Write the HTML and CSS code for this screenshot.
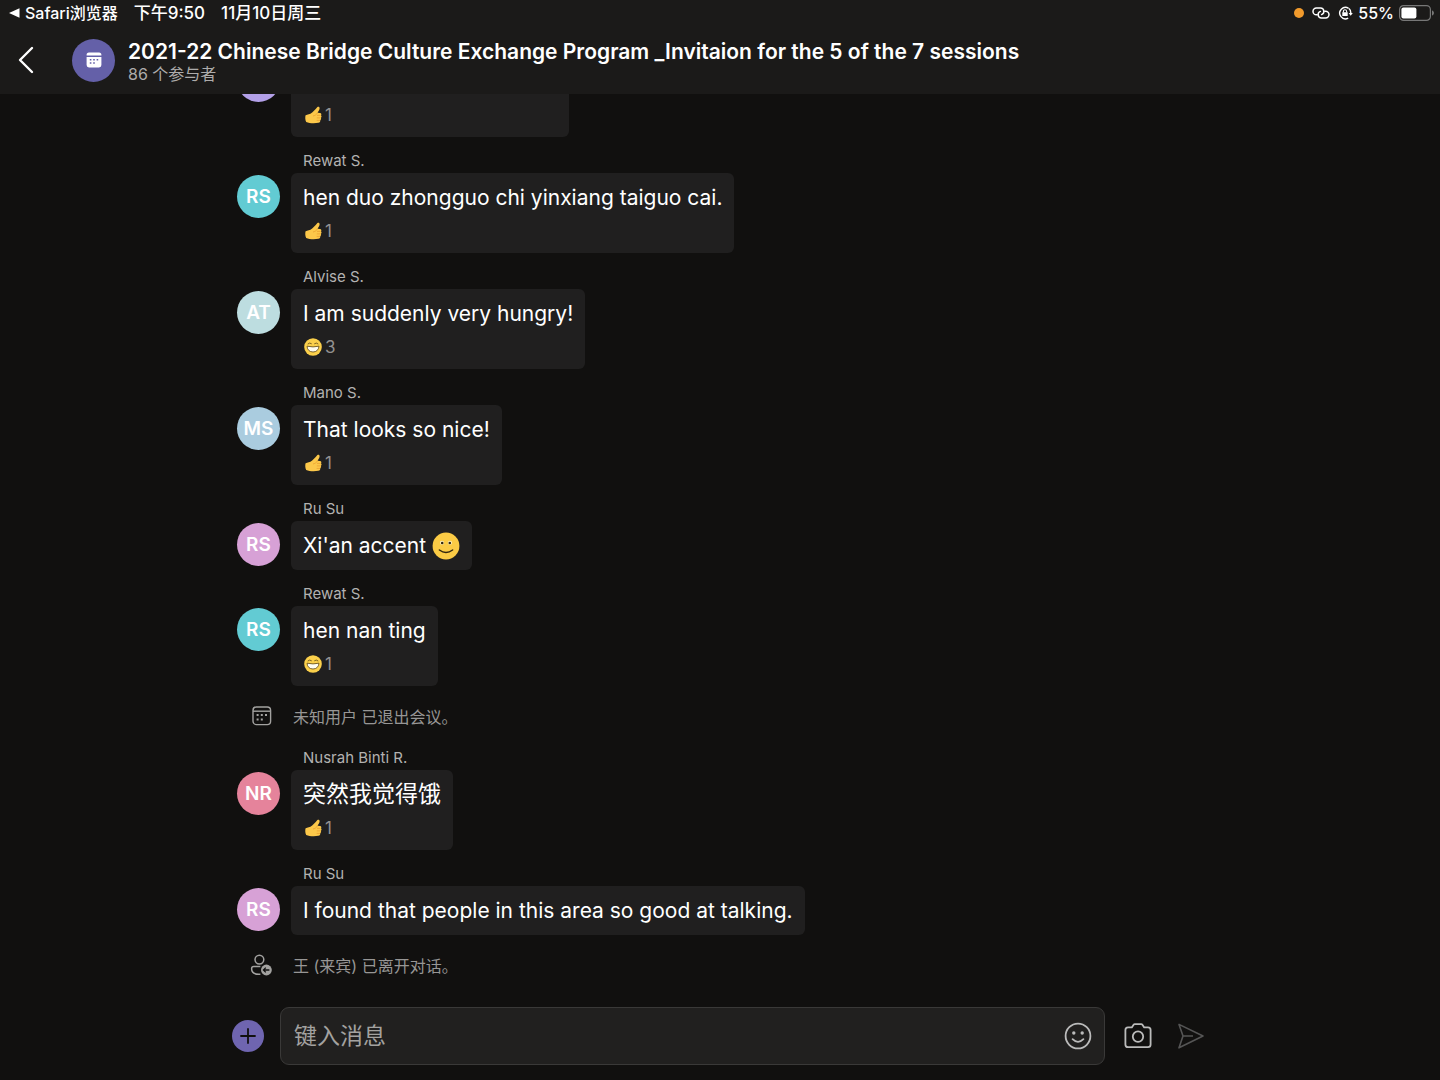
FILE: index.html
```html
<!DOCTYPE html>
<html lang="zh-CN">

<head>
  <meta charset="UTF-8">
  <meta name="viewport" content="width=device-width, initial-scale=1.0">
  <title>Meeting chat</title>
  <link rel="stylesheet" href="styles.css">
</head>

<body>

  <!-- shared icons -->
  <svg class="sprite" aria-hidden="true">
    <symbol id="thumb" viewBox="0 0 18 18">
      <path fill="#fcc84a" d="M1.6 9.2C3 8.6 4.8 8.4 6.4 7.8C8.8 6.2 11.2 3.6 13.4 1C14.4.2 15.8.8 15.6 2.4C15.4 4 14.2 5.4 13.6 6.8L16 6.9C17.4 7 17.8 8.4 17 9.2C17.8 10 17.7 11.2 16.9 11.8C17.4 12.6 17 13.7 16.3 14.2C16.5 15.4 15.8 16.5 14.4 16.8C10.4 17.6 5.2 17.3 2.2 16C1.2 14.4 1 11 1.6 9.2Z"/>
      <path fill="none" stroke="#e89b2c" stroke-width=".7" d="M13 9.4H16.6M12.8 11.9H16.6M12.6 14.4H16M9 10C10.8 9.6 12.6 8.6 13.6 6.8"/>
    </symbol>
    <symbol id="laugh" viewBox="0 0 18 18">
      <circle cx="9" cy="9" r="8.8" fill="#fbd04b"/>
      <path fill="none" stroke="#5b4514" stroke-width=".8" stroke-linecap="round" d="M4 5.8Q5.6 4.2 7.4 5.6M10.6 5.6Q12.4 4.2 14 5.8"/>
      <path fill="#fffdf0" stroke="#5b4514" stroke-width=".8" stroke-linejoin="round" d="M3 8.2Q9 9.6 15 8.2Q14.4 13.8 9 14Q3.6 13.8 3 8.2Z"/>
    </symbol>
  </svg>

  <header class="top-bar">
    <div class="status-bar">
      <div class="status-left">
        <svg width="11" height="10" viewBox="0 0 11 10"><path fill="#fff" d="M10.5.2V9.8L0 5Z"/></svg>
        <span>Safari浏览器</span>
        <span class="status-time">下午9:50</span>
        <span class="status-time">11月10日周三</span>
      </div>
      <div class="status-right">
        <span class="mic-dot"></span>
        <svg width="18" height="12" viewBox="0 0 18 12" fill="none" stroke="#fff" stroke-width="1.5" stroke-linecap="round">
          <path d="M5.2 7.8H4.4A3.4 3.4 0 0 1 4.4 1H8.6A3.4 3.4 0 0 1 9.6 7.6"/>
          <path d="M12.8 4.2H13.6A3.4 3.4 0 0 1 13.6 11H9.4A3.4 3.4 0 0 1 8.4 4.4"/>
        </svg>
        <svg width="15" height="14" viewBox="0 0 15 14" fill="none" stroke="#fff" stroke-width="1.4">
          <path d="M10.6 2.3A5.7 5.7 0 1 0 10.2 12.1M11 2.6A5.7 5.7 0 0 1 12.7 7.4"/>
          <path fill="#fff" stroke="none" d="M10.6 7H14.8L12.7 9.8ZM4.3 6.3H9.7V10H4.3Z"/>
          <path stroke-width="1.1" d="M5.4 6.5V5.3A1.6 1.6 0 0 1 8.6 5.3V6.5"/>
        </svg>
        <span class="battery-text">55%</span>
        <svg width="35" height="16" viewBox="0 0 35 16">
          <rect x=".6" y=".6" width="30.8" height="14.8" rx="4" fill="none" stroke="#777" stroke-width="1.2"/>
          <rect x="2.4" y="2.4" width="15" height="11.2" rx="2" fill="#fff"/>
          <path fill="#777" d="M33 5.2Q35 6.4 35 8T33 10.8Z"/>
        </svg>
      </div>
    </div>
    <div class="chat-header">
      <button class="back-button" type="button" aria-label="返回">
        <svg width="16" height="28" viewBox="0 0 16 28" fill="none" stroke="#fff" stroke-width="2.4" stroke-linecap="round" stroke-linejoin="round"><path d="M14 2L2 14L14 26"/></svg>
      </button>
      <div class="avatar meeting-avatar">
        <svg width="16" height="16" viewBox="0 0 16 16">
          <path fill="#fff" d="M3 .5H13A2.4 2.4 0 0 1 15.4 3V3.6H.6V3A2.4 2.4 0 0 1 3 .5ZM.6 5H15.4V13A2.4 2.4 0 0 1 13 15.4H3A2.4 2.4 0 0 1 .6 13Z"/>
          <path fill="#6460a8" d="M3.8 7H5.4V8.6H3.8ZM7.2 7H8.8V8.6H7.2ZM10.6 7H12.2V8.6H10.6ZM3.8 10.2H5.4V11.8H3.8ZM7.2 10.2H8.8V11.8H7.2Z"/>
        </svg>
      </div>
      <div class="chat-title">
        <h1>2021-22 Chinese Bridge Culture Exchange Program _Invitaion for the 5 of the 7 sessions</h1>
        <p>86 个参与者</p>
      </div>
    </div>
  </header>

  <!-- column-reverse keeps the list scrolled to the newest message -->
  <main class="chat">
    <ul class="messages">
      <li class="message">
        <div class="avatar violet"></div>
        <div class="message-body">
          <div class="bubble bubble-media">
            <div class="reaction"><svg width="18" height="18"><use href="#thumb"/></svg>1</div>
          </div>
        </div>
      </li>
      <li class="message">
        <div class="avatar teal">RS</div>
        <div class="message-body">
          <div class="sender">Rewat S.</div>
          <div class="bubble">
            <p>hen duo zhongguo chi yinxiang taiguo cai.</p>
            <div class="reaction"><svg width="18" height="18"><use href="#thumb"/></svg>1</div>
          </div>
        </div>
      </li>
      <li class="message">
        <div class="avatar mint">AT</div>
        <div class="message-body">
          <div class="sender">Alvise S.</div>
          <div class="bubble">
            <p>I am suddenly very hungry!</p>
            <div class="reaction"><svg width="18" height="18"><use href="#laugh"/></svg>3</div>
          </div>
        </div>
      </li>
      <li class="message">
        <div class="avatar blue">MS</div>
        <div class="message-body">
          <div class="sender">Mano S.</div>
          <div class="bubble">
            <p>That looks so nice!</p>
            <div class="reaction"><svg width="18" height="18"><use href="#thumb"/></svg>1</div>
          </div>
        </div>
      </li>
      <li class="message">
        <div class="avatar pink">RS</div>
        <div class="message-body">
          <div class="sender">Ru Su</div>
          <div class="bubble">
            <p>Xi'an accent
              <svg width="28" height="28" viewBox="0 0 28 28">
                <circle cx="14" cy="14" r="13.4" fill="#fbcb45"/>
                <circle cx="10" cy="10.8" r="2" fill="#fff3c4"/>
                <circle cx="18" cy="10.8" r="2" fill="#fff3c4"/>
                <circle cx="10.2" cy="11" r="1.3" fill="#33270f"/>
                <circle cx="17.8" cy="11" r="1.3" fill="#33270f"/>
                <path fill="none" stroke="#33270f" stroke-width="1.5" stroke-linecap="round" d="M7.4 18Q14 22.8 20.6 18"/>
              </svg>
            </p>
          </div>
        </div>
      </li>
      <li class="message">
        <div class="avatar teal">RS</div>
        <div class="message-body">
          <div class="sender">Rewat S.</div>
          <div class="bubble">
            <p>hen nan ting</p>
            <div class="reaction"><svg width="18" height="18"><use href="#laugh"/></svg>1</div>
          </div>
        </div>
      </li>
      <li class="system">
        <svg width="22" height="22" viewBox="0 0 22 22" fill="none" stroke="#a3a2a0" stroke-width="1.4">
          <rect x="3" y="2" width="17.6" height="17.6" rx="3.4"/>
          <path d="M3 6.2H20.6"/>
          <path fill="#a3a2a0" stroke="none" d="M6.6 9H8.6V11H6.6ZM10.8 9H12.8V11H10.8ZM15 9H17V11H15ZM6.6 13.4H8.6V15.4H6.6ZM10.8 13.4H12.8V15.4H10.8Z"/>
        </svg>
        <span>未知用户 已退出会议。</span>
      </li>
      <li class="message">
        <div class="avatar rose">NR</div>
        <div class="message-body">
          <div class="sender">Nusrah Binti R.</div>
          <div class="bubble">
            <p class="chinese">突然我觉得饿</p>
            <div class="reaction"><svg width="18" height="18"><use href="#thumb"/></svg>1</div>
          </div>
        </div>
      </li>
      <li class="message">
        <div class="avatar pink">RS</div>
        <div class="message-body">
          <div class="sender">Ru Su</div>
          <div class="bubble">
            <p>I found that people in this area so good at talking.</p>
          </div>
        </div>
      </li>
      <li class="system">
        <svg width="22" height="22" viewBox="0 0 22 22" fill="none" stroke="#a3a2a0" stroke-width="1.5">
          <circle cx="9.4" cy="5.6" r="4.4"/>
          <path d="M10.4 12.6H3.8Q1.6 12.6 1.6 14.8Q1.6 20.3 9 20.3H10.4"/>
          <circle cx="16.4" cy="16" r="5.4" fill="#a3a2a0" stroke="none"/>
          <path stroke="#11100f" stroke-width="1.3" d="M19.4 16H13.6M15.8 13.6L13.4 16L15.8 18.4"/>
        </svg>
        <span>王 (来宾) 已离开对话。</span>
      </li>
    </ul>
  </main>

  <form class="composer">
    <button class="add-button" type="button" aria-label="添加">
      <svg width="16" height="16" viewBox="0 0 16 16" stroke="#11100f" stroke-width="1.8" stroke-linecap="round"><path d="M8 1V15M1 8H15"/></svg>
    </button>
    <div class="message-box">
      <input type="text" placeholder="键入消息" aria-label="键入消息">
      <button type="button" aria-label="表情">
        <svg width="28" height="28" viewBox="0 0 28 28" fill="none" stroke="#bbb" stroke-width="1.8" stroke-linecap="round">
          <circle cx="14" cy="14" r="12.4"/>
          <path d="M8.6 17.2Q14 22.6 19.4 17.2"/>
          <circle cx="9.8" cy="11" r="1.7" fill="#bbb" stroke="none"/>
          <circle cx="18.2" cy="11" r="1.7" fill="#bbb" stroke="none"/>
        </svg>
      </button>
    </div>
    <button type="button" aria-label="相机">
      <svg width="28" height="28" viewBox="0 0 28 28" fill="none" stroke="#bbb" stroke-width="1.8" stroke-linejoin="round">
        <path d="M4 5.4H7.8L9.6 2.8Q10 2.2 10.8 2.2H17.2Q18 2.2 18.4 2.8L20.2 5.4H24Q26.6 5.4 26.6 8V22.6Q26.6 25.2 24 25.2H4Q1.4 25.2 1.4 22.6V8Q1.4 5.4 4 5.4Z"/>
        <circle cx="14" cy="14.6" r="5.2"/>
      </svg>
    </button>
    <button type="submit" aria-label="发送" disabled>
      <svg width="28" height="28" viewBox="0 0 28 28" fill="none" stroke="#555" stroke-width="1.6" stroke-linejoin="round">
        <path d="M2 2.4L26 14L2 25.8L6 14ZM6 14H16"/>
      </svg>
    </button>
  </form>

</body>

</html>
```
FILE: styles.css
```css
* {
  box-sizing: border-box;
}

body {
  margin: 0;
  height: 100vh;
  display: flex;
  flex-direction: column;
  background: #11100f;
  color: #fff;
  font-family: Inter, "Noto Sans CJK SC", sans-serif;
}

h1,
p,
ul {
  margin: 0;
  padding: 0;
}

svg {
  display: block;
  flex: none;
}

button {
  padding: 0;
  border: 0;
  background: none;
  cursor: pointer;
}

.sprite {
  position: absolute;
  width: 0;
  height: 0;
}

/* header */
.top-bar {
  flex: none;
  background: #1b1a19;
  padding-bottom: 4px;
}

.status-bar {
  display: flex;
  justify-content: space-between;
  height: 26px;
  padding: 0 6px 0 9px;
  font-size: 16px;
  font-weight: 500;
  line-height: 26px;
}

.status-left,
.status-right {
  display: flex;
  align-items: center;
}

.status-left {
  gap: 5px;
}

.status-time {
  margin-left: 11px;
  font-size: 17px;
}

.status-right {
  gap: 8px;
}

.battery-text {
  margin-left: -3px;
  margin-right: -3px;
}

.mic-dot {
  width: 10px;
  height: 10px;
  border-radius: 50%;
  background: #f19a2c;
}

.chat-header {
  display: flex;
  align-items: center;
  height: 64px;
  padding: 4px 18px 0;
}

.back-button {
  margin-right: 38px;
}

.avatar {
  display: flex;
  align-items: center;
  justify-content: center;
  flex: none;
  width: 43px;
  height: 43px;
  border-radius: 50%;
  font-size: 19px;
  font-weight: 600;
}

.meeting-avatar {
  margin-right: 13px;
  background: #6460a8;
}

.chat-title {
  padding-top: 4px;
}

.chat-title h1 {
  font-size: 21px;
  font-weight: 600;
  line-height: 23px;
}

.chat-title p {
  color: #adacab;
  font-size: 16px;
  line-height: 22px;
}

/* messages */
.chat {
  flex: 1;
  min-height: 0;
  display: flex;
  flex-direction: column-reverse;
  overflow-y: auto;
  scrollbar-width: none;
}

.messages {
  display: flex;
  flex-direction: column;
  gap: 12px;
  width: 100%;
  max-width: 976px;
  margin: 0 auto;
  padding: 0 5px 24px;
  list-style: none;
}

.message {
  display: flex;
  gap: 11px;
}

.message .avatar {
  margin-top: 26px;
}

.message-body {
  display: flex;
  flex-direction: column;
  align-items: flex-start;
}

.sender {
  padding-left: 12px;
  color: #b3b2b1;
  font-size: 15px;
  line-height: 24px;
}

.bubble {
  padding: 10px 12px;
  border-radius: 6px;
  background: #201f1f;
}

.bubble p {
  display: flex;
  align-items: center;
  gap: 6px;
  font-size: 21px;
  line-height: 29px;
}

.bubble .chinese {
  font-size: 23px;
}

.bubble-media {
  display: flex;
  align-items: flex-end;
  width: 278px;
  height: 80px;
  margin-top: 24px;
}

.reaction {
  display: flex;
  align-items: center;
  gap: 3px;
  height: 24px;
  margin-top: 7px;
  padding-left: 1px;
  color: #929190;
  font-size: 17px;
}

.violet {
  background: #b3a0e8;
}

.teal {
  background: #62cbd3;
}

.mint {
  background: #bddde0;
}

.blue {
  background: #aaccdf;
}

.pink {
  background: #d7a1d6;
}

.rose {
  background: #e5839b;
}

.system {
  display: flex;
  align-items: center;
  gap: 21px;
  height: 36px;
  padding-left: 13px;
  color: #979695;
  font-size: 16px;
}

/* composer */
.composer {
  flex: none;
  display: flex;
  align-items: center;
  width: 100%;
  max-width: 976px;
  margin: 0 auto;
  padding: 0 3px 15px 0;
  gap: 19px;
}

.add-button {
  display: flex;
  align-items: center;
  justify-content: center;
  width: 32px;
  height: 32px;
  margin-right: -3px;
  border-radius: 50%;
  background: #6f65b0;
}

.message-box {
  flex: 1;
  display: flex;
  align-items: center;
  height: 58px;
  padding: 0 12px 0 13px;
  border: 1px solid #3a3938;
  border-radius: 9px;
  background: #21201f;
}

.message-box input {
  flex: 1;
  min-width: 0;
  padding: 0;
  border: 0;
  outline: 0;
  background: none;
  color: #fff;
  font-family: inherit;
  font-size: 23px;
}

.message-box input::placeholder {
  color: #a3a2a0;
}

.composer > button[type="submit"] {
  margin-left: 6px;
}
```
